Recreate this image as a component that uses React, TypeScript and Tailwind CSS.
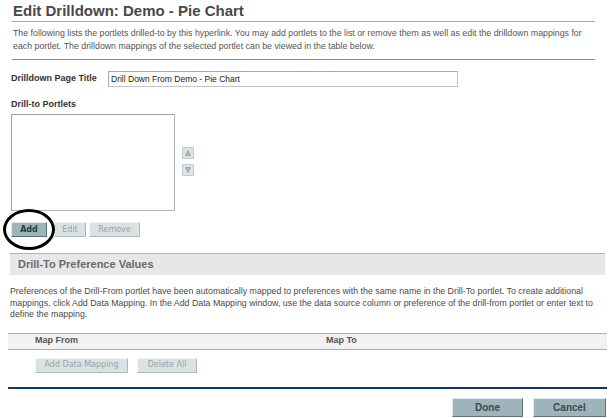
import React from "react";

const btnOn =
  "h-[15px] text-[8px] font-bold whitespace-nowrap text-[#2b3a3f] bg-[#9db4bb] border border-t-[#e3ecee] border-l-[#e3ecee] border-r-[#5e7177] border-b-[#5e7177] leading-none";
const btnOff =
  "h-[15px] text-[8px] whitespace-nowrap text-[#97a2a7] bg-[#dbe2e4] border border-t-[#f3f6f7] border-l-[#f3f6f7] border-r-[#aeb8bb] border-b-[#aeb8bb] leading-none";

export default function App() {
  return (
    <div
      className="relative w-[609px] h-[418px] overflow-hidden bg-white text-[#4a4a4a]"
      style={{ fontFamily: '"Liberation Sans", Arial, sans-serif' }}
    >
      {/* title */}
      <div className="mx-[12px] pt-[2px] pb-[1px] border-b border-[#a7a7a7] w-[583px]">
        <h1 className="text-[15px] font-bold leading-[18px] text-[#4b4847] pl-[1px]">
          Edit Drilldown: Demo - Pie Chart
        </h1>
      </div>
      <div className="mx-[12px] w-[583px] border-b border-[#7c8fab] pt-[5px] pb-[6px] pl-[1px] text-[8.8px] leading-[13px] text-[#555] whitespace-nowrap">
        The following lists the portlets drilled-to by this hyperlink. You may add portlets to the list or remove them as well as edit the drilldown mappings for
        <br />
        each portlet. The drilldown mappings of the selected portlet can be viewed in the table below.
      </div>

      {/* page title row */}
      <div className="flex items-center ml-[11px] mt-[11px] h-[16px]">
        <span className="w-[97px] text-[9px] font-bold text-[#333]">Drilldown Page Title</span>
        <div className="w-[350px] h-[16px] border border-[#c4c4c4] border-t-[#a9a9a9] border-l-[#a9a9a9] flex items-center pl-[2px] text-[8.5px] text-[#222]">
          Drill Down From Demo - Pie Chart
        </div>
      </div>

      <div className="ml-[11px] mt-[12px] text-[9px] font-bold text-[#333] leading-[11px]">Drill-to Portlets</div>

      {/* list + arrows */}
      <div className="flex items-center ml-[11px] mt-[4px]">
        <div className="w-[164px] h-[97px] border border-[#b5b5b5] border-t-[#9f9f9f] border-l-[#9f9f9f] bg-white" />
        <div className="flex flex-col gap-[5px] ml-[7px] -mt-[2px]">
          <div className="w-[12px] h-[12px] bg-[#dfe4e6] border border-[#c4cbce] flex items-center justify-center">
            <svg width="6" height="6" viewBox="0 0 6 6">
              <path d="M3 0.5 L5.5 5.5 L0.5 5.5 Z" fill="#b7bec1" stroke="#8b9397" strokeWidth="0.7" />
            </svg>
          </div>
          <div className="w-[12px] h-[12px] bg-[#dfe4e6] border border-[#c4cbce] flex items-center justify-center">
            <svg width="6" height="6" viewBox="0 0 6 6">
              <path d="M0.5 0.5 L5.5 0.5 L3 5.5 Z" fill="#b7bec1" stroke="#8b9397" strokeWidth="0.7" />
            </svg>
          </div>
        </div>
      </div>

      {/* add / edit / remove */}
      <div className="relative flex ml-[11px] mt-[11px]" style={{ fontFamily: '"DejaVu Sans", Verdana, sans-serif' }}>
        <button className={`${btnOn} w-[36px]`}>Add</button>
        <button className={`${btnOff} w-[32px] ml-[7px]`}>Edit</button>
        <button className={`${btnOff} w-[51px] ml-[3px]`}>Remove</button>
        <div className="absolute -left-[8px] -top-[13px] w-[52px] h-[41px] rounded-[50%] border-[3px] border-black" />
      </div>

      {/* section header */}
      <div className="ml-[10px] mt-[16px] w-[595px] h-[22px] bg-[#e7e7e7] border-t border-[#b3b3b3] flex items-center pl-[8px] text-[11px] font-bold text-[#6a6a6a]">
        Drill-To Preference Values
      </div>
      <div className="ml-[10px] mt-[11px] text-[8.8px] leading-[11.5px] text-[#4a4a4a] whitespace-nowrap">
        Preferences of the Drill-From portlet have been automatically mapped to preferences with the same name in the Drill-To portlet. To create additional
        <br />
        mappings, click Add Data Mapping. In the Add Data Mapping window, use the data source column or preference of the drill-from portlet or enter text to
        <br />
        define the mapping.
      </div>

      {/* table header */}
      <div className="ml-[8px] mt-[12px] w-[599px] h-[17px] bg-[#f2f2f2] border-t border-b border-[#ababab] flex items-center text-[9px] font-bold text-[#555]">
        <span className="w-[291px] pl-[27px]">Map From</span>
        <span className="pl-[27px]">Map To</span>
      </div>
      <div className="flex ml-[35px] mt-[8px] gap-[9px]" style={{ fontFamily: '"DejaVu Sans", Verdana, sans-serif' }}>
        <button className={`${btnOff} w-[93px]`}>Add Data Mapping</button>
        <button className={`${btnOff} w-[60px]`}>Delete All</button>
      </div>

      {/* footer */}
      <div className="ml-[8px] mt-[14px] w-[599px] h-[2px] bg-[#0f3868]" />
      <div className="flex justify-end gap-[10px] mt-[9px] pr-[3px]">
        <button className="w-[71px] h-[19px] text-[10px] font-bold text-[#3b4a50] bg-[#9db4bb] border border-t-[#e3ecee] border-l-[#e3ecee] border-r-[#5e7177] border-b-[#5e7177]">
          Done
        </button>
        <button className="w-[73px] h-[19px] text-[10px] font-bold text-[#3b4a50] bg-[#9db4bb] border border-t-[#e3ecee] border-l-[#e3ecee] border-r-[#5e7177] border-b-[#5e7177]">
          Cancel
        </button>
      </div>
    </div>
  );
}
